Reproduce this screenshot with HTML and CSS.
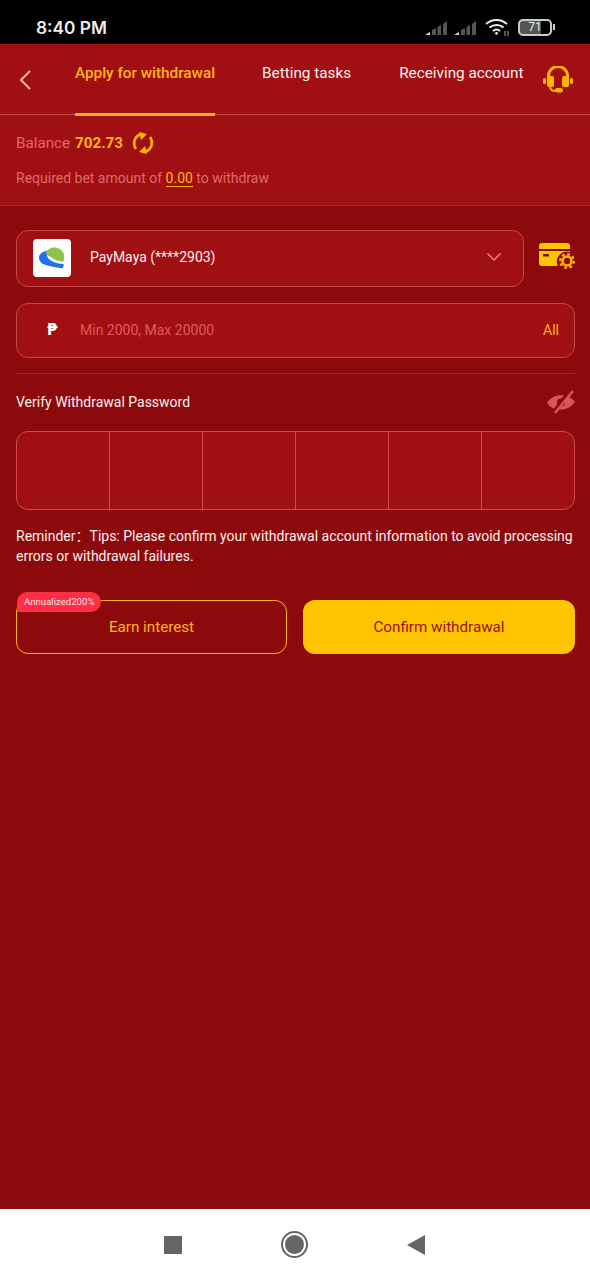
FILE: index.html
```html
<!DOCTYPE html>
<html lang="en">
<head>
  <meta charset="UTF-8">
  <meta name="viewport" content="width=device-width, initial-scale=1.0">
  <title>Apply for withdrawal</title>
  <link rel="stylesheet" href="styles.css">
</head>
<body>
  <div class="phone">
    <!-- Status bar -->
    <div class="status-bar">
      <span class="clock">8:40 PM</span>
      <div class="status-icons">
        <svg class="signal" width="23" height="17" viewBox="0 0 23 17">
          <path d="M0 16l5-3v3z" fill="#ddd"/>
          <path d="M7 11l4-2v7H7z" fill="#555"/>
          <path d="M12.500 8l3.500-2v10h-3.500z" fill="#555"/>
          <path d="M18 5l4-3v14h-4z" fill="#555"/>
        </svg>
        <svg class="signal" width="23" height="17" viewBox="0 0 23 17">
          <path d="M0 16l5-3v3z" fill="#ddd"/>
          <path d="M7 11l4-2v7H7z" fill="#555"/>
          <path d="M12.500 8l3.500-2v10h-3.500z" fill="#555"/>
          <path d="M18 5l4-3v14h-4z" fill="#555"/>
        </svg>
        <svg class="wifi" width="24" height="19" viewBox="0 0 24 19" fill="none" stroke="#eee" stroke-width="2">
          <path d="M1 6c6-5.500 15-5.500 21 0"/>
          <path d="M4.500 9.500c4-3.500 10-3.500 14 0"/>
          <path d="M8 13c2-1.700 5-1.700 7 0"/>
          <path d="M9.500 15l2 2 2-2-2-1z" fill="#eee" stroke="none"/>
          <path d="M20 13v5M23 13v5" stroke="#aaa" stroke-width="1"/>
        </svg>
        <div class="battery"><span>71</span></div>
        <div class="battery-tip"></div>
      </div>
    </div>

    <!-- Tabs -->
    <div class="topbar">
      <svg class="back" width="14" height="22" viewBox="0 0 14 22" fill="none" stroke="#f0b5b5" stroke-width="2">
        <path d="M12 2L3 11l9 9"/>
      </svg>
      <div class="tab active">Apply for withdrawal</div>
      <div class="tab tab-two">Betting tasks</div>
      <div class="tab tab-three">Receiving account</div>
      <svg class="headset" width="32" height="28" viewBox="0 0 32 28">
        <path d="M6.500 14V10a9.500 9.500 0 0 1 19 0v4" fill="none" stroke="#ffb300" stroke-width="3"/>
        <rect x="5" y="10" width="7" height="11" rx="2" fill="#ffb300"/>
        <rect x="20" y="10" width="7" height="11" rx="2" fill="#ffb300"/>
        <rect x="1" y="12" width="3" height="6" rx="1.500" fill="#ffb300"/>
        <rect x="28" y="12" width="3" height="6" rx="1.500" fill="#ffb300"/>
        <path d="M8 20c0 4 2 5 6 5" fill="none" stroke="#ffb300" stroke-width="2"/>
        <rect x="13" y="22" width="8" height="4.500" rx="2.200" fill="#ffb300"/>
      </svg>
    </div>

    <!-- Balance -->
    <div class="balance-box">
      <div class="balance-row">
        <span>Balance</span>
        <b class="amount">702.73</b>
        <svg class="refresh" width="24" height="24" viewBox="0 0 24 24" fill="none" stroke="#ffb300" stroke-width="2.600">
          <path d="M5 18C1.500 13 3 6 9 3.500"/>
          <path d="M19 6c3.500 5 2 12-4 14.500"/>
          <path d="M8 1l8 2-6 6z" fill="#ffb300" stroke="none"/>
          <path d="M16 23l-8-2 6-6z" fill="#ffb300" stroke="none"/>
        </svg>
      </div>
      <div class="required">Required bet amount of <span class="zero">0.00</span> to withdraw</div>
    </div>

    <div class="content">
      <div class="select-row">
        <div class="select-box">
          <svg class="logo" width="38" height="38" viewBox="0 0 38 38">
            <path d="M15 11.500C9 12.500 5.500 15.500 6 19.500c.5 3.500 3 5.500 6.500 6.500 5.500 1.500 12 2.700 17 3.300 1-1 1.300-2.700 1-4.300-4-.3-7.500-1-11-2.500-5-2.200-7-6-4.500-11z" fill="#1a73e8"/>
            <path d="M12.700 14C14 10.500 18 8.200 22 8.500c4.500.4 8 3 9 7 .4 2.300.2 5-1 7.200-4-.5-7.500-1.500-10.500-3.500-2.500-1.500-5.500-3-6.800-5.200z" fill="#8bc34a"/>
          </svg>
          <span class="account">PayMaya (****2903)</span>
          <svg class="chevron" width="16" height="10" viewBox="0 0 16 10" fill="none" stroke="#e58080" stroke-width="1.500">
            <path d="M1.500 1.500L8 8l6.500-6.500"/>
          </svg>
        </div>
        <svg class="card-gear" width="36" height="27" viewBox="0 0 36 27">
          <path d="M3 1h25a3 3 0 0 1 3 3v3H0V4a3 3 0 0 1 3-3z" fill="#ffc400"/>
          <path d="M0 9h31v1a10 10 0 0 0-12 14H3a3 3 0 0 1-3-3z" fill="#ffc400"/>
          <rect x="4" y="12" width="6" height="2.500" fill="#8d0a0c"/>
          <circle cx="28" cy="19" r="4.500" fill="none" stroke="#ffb300" stroke-width="2.600"/>
          <circle cx="28" cy="19" r="6.800" fill="none" stroke="#ffb300" stroke-width="2.400" stroke-dasharray="2.700 2.640"/>
        </svg>
      </div>

      <div class="amount-box">
        <span class="peso">₱</span>
        <span class="placeholder">Min 2000, Max 20000</span>
        <span class="all">All</span>
      </div>

      <div class="divider"></div>

      <div class="verify-row">
        <span>Verify Withdrawal Password</span>
        <svg class="eye" width="28" height="24" viewBox="0 0 28 24">
          <path d="M0 13C6 3 21 3 28 12 21 22 6 22 0 13z" fill="#d9555a"/>
          <circle cx="14" cy="12.500" r="4" fill="#8d0a0c"/>
          <path d="M24 0L6 24" stroke="#8d0a0c" stroke-width="5"/>
          <path d="M26 1L8 23" stroke="#d9555a" stroke-width="2.500"/>
        </svg>
      </div>

      <div class="pin-box">
        <div class="pin-cell"></div>
        <div class="pin-cell"></div>
        <div class="pin-cell"></div>
        <div class="pin-cell"></div>
        <div class="pin-cell"></div>
        <div class="pin-cell"></div>
      </div>

      <p class="reminder">Reminder：Tips: Please confirm your withdrawal account information to avoid processing errors or withdrawal failures.</p>

      <div class="buttons">
        <div class="btn btn-outline">
          <span class="badge">Annualized200%</span>
          Earn interest
        </div>
        <div class="btn btn-solid">Confirm withdrawal</div>
      </div>
    </div>

    <!-- Android nav bar -->
    <div class="nav-bar">
      <div class="nav-square"></div>
      <div class="nav-circle"><div></div></div>
      <svg width="18" height="20" viewBox="0 0 18 20"><path d="M0 10L18 0v20z" fill="#666"/></svg>
    </div>
  </div>
</body>
</html>
```

FILE: styles.css
```css
* {
  box-sizing: border-box;
}
body {
  margin: 0;
  font-family: Roboto, "Noto Sans CJK SC", "Liberation Sans", sans-serif;
  background: #8d0a0c;
}
.phone {
  width: 590px;
  height: 1280px;
  display: flex;
  flex-direction: column;
  background: #8d0a0c;
  overflow: hidden;
}

/* Status bar */
.status-bar {
  height: 44px;
  flex: none;
  background: #000;
  display: flex;
  align-items: center;
  justify-content: space-between;
  padding: 10px 35px 0 36px;
}
.clock {
  color: #eee;
  font-size: 17.300px;
  font-weight: 600;
  font-family: Inter, Roboto, sans-serif;
}
.status-icons {
  display: flex;
  align-items: center;
  gap: 6px;
}
.wifi {
  margin-left: 2px;
}
.battery {
  width: 34px;
  height: 17px;
  margin-left: 3px;
  border: 2px solid #ccc;
  border-radius: 5px;
  background: linear-gradient(to right, #555 71%, transparent 71%);
  color: #eee;
  font-size: 12px;
  line-height: 13px;
  text-align: center;
}
.battery-tip {
  width: 2px;
  height: 6px;
  margin-left: -5px;
  background: #ccc;
}

/* Tabs */
.topbar {
  height: 71px;
  flex: none;
  display: flex;
  background: #a01012;
  border-bottom: 1px solid #c8474a;
  padding-left: 18px;
  position: relative;
}
.back {
  margin-top: 25px;
  flex: none;
}
.tab {
  color: #fbeeee;
  font-size: 15.300px;
  line-height: 58px;
  white-space: nowrap;
}
.tab.active {
  margin-left: 43px;
  height: 72px;
  color: #ffb31a;
  font-weight: 500;
  border-bottom: 3px solid #ffb31a;
}
.tab-two {
  margin-left: 47px;
}
.tab-three {
  margin-left: 48px;
}
.headset {
  margin: 22px 0 0 19px;
  flex: none;
}

/* Balance */
.balance-box {
  height: 91px;
  flex: none;
  background: #a01012;
  border-bottom: 1px solid #ad2a2c;
  padding: 14px 16px 0;
  color: #e0686a;
  font-size: 14px;
}
.balance-row {
  display: flex;
  align-items: center;
  height: 28px;
  font-size: 15.200px;
}
.amount {
  color: #ffb31a;
  font-size: 15.200px;
  font-weight: 700;
  margin-left: 5px;
}
.refresh {
  margin-left: 8px;
}
.required {
  margin-top: 13px;
  line-height: 16px;
}
.zero {
  color: #ffb31a;
  border-bottom: 1px solid #ffb31a;
}

/* Form */
.content {
  flex: 1;
  padding: 24px 15px 0 16px;
}
.select-row {
  display: flex;
  align-items: center;
}
.select-box {
  width: 508px;
  height: 57px;
  display: flex;
  align-items: center;
  background: #a01012;
  border: 1px solid #c8474a;
  border-radius: 12px;
  padding: 0 21px 3px 16px;
}
.logo {
  width: 38px;
  height: 38px;
  flex: none;
  margin-top: 1px;
  background: #fff;
  border-radius: 4px;
}
.account {
  color: #fbeeee;
  font-size: 14px;
  margin-left: 19px;
}
.chevron {
  margin-left: auto;
}
.card-gear {
  margin: -6px 0 0 15px;
  overflow: visible;
}
.amount-box {
  height: 55px;
  margin-top: 16px;
  display: flex;
  align-items: center;
  background: #a01012;
  border: 1px solid #c8474a;
  border-radius: 12px;
  padding: 0 15px 2px 30px;
  font-size: 14px;
}
.peso {
  color: #fff;
  font-family: "DejaVu Sans", sans-serif;
  font-weight: 700;
  font-size: 15px;
  width: 33px;
}
.placeholder {
  color: #e0585c;
}
.all {
  color: #ffb31a;
  margin-left: auto;
}
.divider {
  height: 1px;
  margin-top: 15px;
  background: #a3282a;
}
.verify-row {
  height: 57px;
  display: flex;
  align-items: center;
  justify-content: space-between;
  color: #fbeeee;
  font-size: 14px;
  padding-bottom: 2px;
}
.pin-box {
  height: 79px;
  display: flex;
  background: #a01012;
  border: 1px solid #d24a4d;
  border-radius: 12px;
}
.pin-cell {
  flex: 1;
  border-left: 1px solid #d24a4d;
}
.pin-cell:first-child {
  border-left: 0;
}
.reminder {
  margin: 16px 0 0;
  color: #fbeeee;
  font-size: 14px;
  line-height: 20px;
}
.buttons {
  display: grid;
  grid-template-columns: 271px 1fr;
  gap: 16px;
  margin-top: 34px;
}
.btn {
  height: 54px;
  border-radius: 12px;
  display: flex;
  align-items: center;
  justify-content: center;
  font-size: 15.200px;
  position: relative;
}
.btn-outline {
  color: #ffb31a;
  border: 1px solid #ffb31a;
}
.btn-solid {
  background: #ffc400;
  color: #a01012;
}
.badge {
  position: absolute;
  left: 0;
  top: -9px;
  height: 20px;
  padding: 0 7px;
  background: #ff2e45;
  color: #f8e4e4;
  font-size: 9.600px;
  line-height: 20px;
  border-radius: 10px 10px 10px 0;
}

/* Android nav bar */
.nav-bar {
  height: 71px;
  flex: none;
  background: #fff;
  display: flex;
  align-items: center;
  justify-content: center;
  gap: 99px;
  padding-right: 2px;
}
.nav-square {
  width: 18px;
  height: 18px;
  background: #666;
}
.nav-circle {
  width: 27px;
  height: 27px;
  border: 2px solid #666;
  border-radius: 50%;
  padding: 2px;
}
.nav-circle div {
  width: 19px;
  height: 19px;
  background: #666;
  border-radius: 50%;
}
```
